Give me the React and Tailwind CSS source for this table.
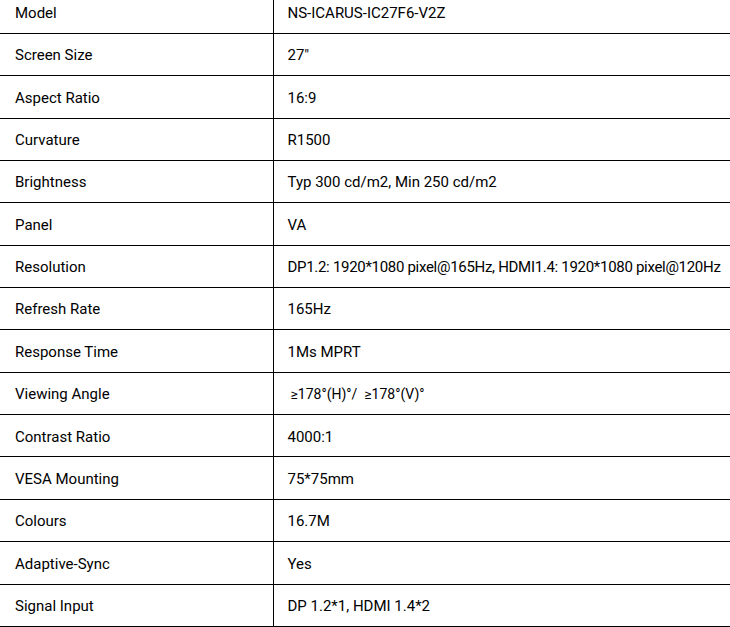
import React from "react";

const specs = [
  ["Model", "NS-ICARUS-IC27F6-V2Z"],
  ["Screen Size", "27\""],
  ["Aspect Ratio", "16:9"],
  ["Curvature", "R1500"],
  ["Brightness", "Typ 300 cd/m2, Min 250 cd/m2"],
  ["Panel", "VA"],
  ["Resolution", "DP1.2: 1920*1080 pixel@165Hz, HDMI1.4: 1920*1080 pixel@120Hz"],
  ["Refresh Rate", "165Hz"],
  ["Response Time", "1Ms MPRT"],
  ["Viewing Angle", "\u2265178\u00b0(H)\u00b0/  \u2265178\u00b0(V)\u00b0"],
  ["Contrast Ratio", "4000:1"],
  ["VESA Mounting", "75*75mm"],
  ["Colours", "16.7M"],
  ["Adaptive-Sync", "Yes"],
  ["Signal Input", "DP 1.2*1, HDMI 1.4*2"],
];

const App = () => {
  return (
    <div className="w-[730px] h-[627px] overflow-hidden bg-white">
      {/* spec table, scrolled slightly so the first row is cut */}
      <table className="w-[730px] table-fixed border-collapse mt-[-9px] text-[15px] text-black font-['Roboto',Arial,sans-serif]">
        <tbody>
          {specs.map(([label, value], i) => (
            <tr key={label} className="h-[42.36px] border-b border-black">
              <td className="w-[273px] px-[15px] pt-[2px] border-r border-black align-middle">
                {label}
              </td>
              <td
                className={
                  i === 9
                    ? "pl-[17px] pr-0 pt-[2px] align-middle whitespace-pre text-[14px]"
                    : i === 6
                    ? "pl-[14px] pr-0 pt-[2px] align-middle whitespace-nowrap tracking-[-0.3px]"
                    : "pl-[14px] pr-0 pt-[2px] align-middle whitespace-nowrap"
                }
              >
                {value}
              </td>
            </tr>
          ))}
        </tbody>
      </table>
    </div>
  );
};

export default App;
